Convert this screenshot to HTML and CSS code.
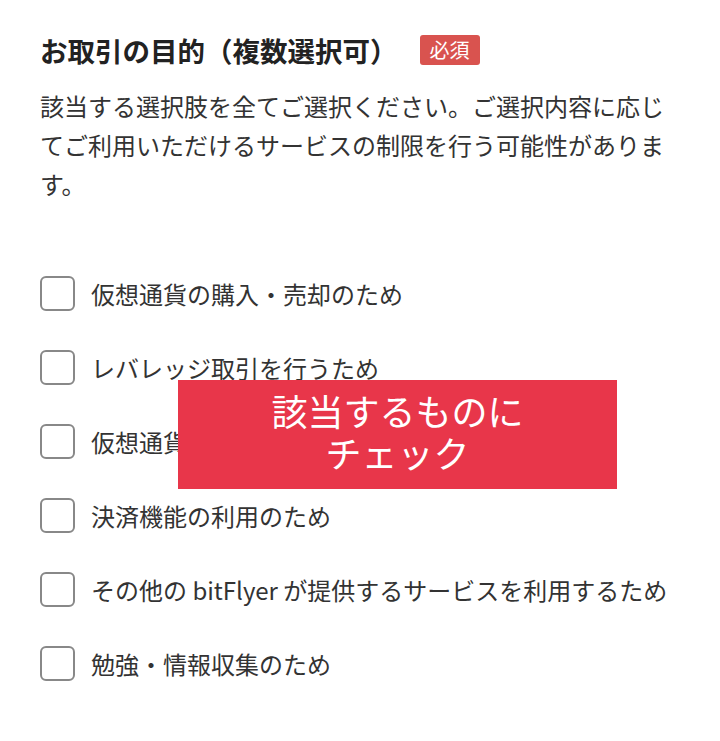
FILE: index.html
```html
<!DOCTYPE html>
<html lang="ja">
<head>
    <meta charset="UTF-8">
    <meta name="viewport" content="width=device-width, initial-scale=1.0">
    <title>お取引の目的</title>
    <link rel="stylesheet" href="styles.css">
</head>
<body>
    <div class="form-section">
        <div class="section-head">
            <h2 class="section-title">お取引の目的（複数選択可）</h2>
            <span class="required">必須</span>
        </div>

        <p class="section-note">該当する選択肢を全てご選択ください。ご選択内容に応じてご利用いただけるサービスの制限を行う可能性があります。</p>

        <ul class="check-list">
            <li><label class="check-item"><input type="checkbox"><span class="box"></span>仮想通貨の購入・売却のため</label></li>
            <li><label class="check-item"><input type="checkbox"><span class="box"></span>レバレッジ取引を行うため</label></li>
            <li><label class="check-item"><input type="checkbox"><span class="box"></span>仮想通貨の送付・受取のため</label></li>
            <li><label class="check-item"><input type="checkbox"><span class="box"></span>決済機能の利用のため</label></li>
            <li><label class="check-item"><input type="checkbox"><span class="box"></span>その他の bitFlyer が提供するサービスを利用するため</label></li>
            <li><label class="check-item"><input type="checkbox"><span class="box"></span>勉強・情報収集のため</label></li>
        </ul>

        <div class="callout">該当するものに<br>チェック</div>
    </div>
</body>
</html>
```

FILE: styles.css
```css
body {
    margin: 0;
    background: #fff;
    font-family: "Noto Sans CJK JP", "Noto Sans", sans-serif;
    color: #333;
}

.form-section {
    position: relative;
    padding: 32px 36px 0 40px;
}

.section-head {
    display: flex;
    align-items: center;
    gap: 22px;
    height: 36px;
}

.section-title {
    margin: 0;
    font-size: 27.5px;
    font-weight: bold;
    color: #222;
    line-height: 36px;
}

.required {
    background: #d9534f;
    color: #fff;
    font-size: 20px;
    line-height: 30px;
    padding: 0 10px;
    border-radius: 3px;
}

.section-note {
    margin: 18px 0 0;
    font-size: 24px;
    line-height: 39px;
}

.check-list {
    list-style: none;
    margin: 53px 0 0;
    padding: 0;
}

.check-item {
    display: flex;
    align-items: center;
    height: 74px;
    font-size: 24px;
}

.check-item input {
    display: none;
}

.box {
    width: 31px;
    height: 31px;
    border: 2px solid #888;
    border-radius: 6px;
    margin-right: 16px;
    flex-shrink: 0;
}

/* overlay annotation */
.callout {
    position: absolute;
    left: 178px;
    top: 380px;
    width: 439px;
    height: 109px;
    box-sizing: border-box;
    padding-top: 9px;
    background: #e8364a;
    color: #fff;
    font-size: 36px;
    line-height: 42px;
    text-align: center;
}
```
